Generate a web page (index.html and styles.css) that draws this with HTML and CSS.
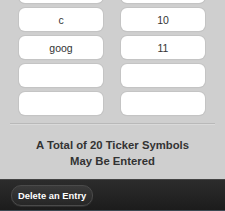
FILE: index.html
```html
<!DOCTYPE html>
<html>
<head>
<meta charset="utf-8">
<link rel="stylesheet" href="styles.css">
</head>
<body>
<div class="page">
  <div class="grid">
    <div class="field"></div><div class="field"></div>
    <div class="field">c</div><div class="field">10</div>
    <div class="field">goog</div><div class="field">11</div>
    <div class="field"></div><div class="field"></div>
    <div class="field"></div><div class="field"></div>
  </div>
  <div class="divider"></div>
  <p class="note">A Total of 20 Ticker Symbols<br>May Be Entered</p>
</div>
<div class="toolbar">
  <button class="btn">Delete an Entry</button>
</div>
</body>
</html>
```
FILE: styles.css
```css
html, body {
  margin: 0;
  padding: 0;
  height: 211px;
  overflow: hidden;
  background: #cfcfcf;
  font-family: "Liberation Sans", Arial, sans-serif;
}
.page {
  height: 179px;
  overflow: hidden;
}
.grid {
  display: grid;
  grid-template-columns: 84px 84px;
  grid-auto-rows: 23px;
  column-gap: 18px;
  row-gap: 5px;
  margin: -20px 0 0 19px;
}
.field {
  background: #ffffff;
  border-radius: 6px;
  box-shadow: 0 0 0 1px #c4c4c4, 0 1px 1px rgba(0,0,0,0.08);
  display: flex;
  align-items: center;
  justify-content: center;
  font-size: 10.5px;
  color: #333333;
}
.divider {
  margin: 8px 10px 0 10px;
  height: 1px;
  background: #b9b9b9;
  border-bottom: 1px solid #dadada;
}
.note {
  margin: 12px 0 0 0;
  text-align: center;
  font-weight: bold;
  font-size: 11.3px;
  line-height: 16px;
  color: #333333;
}
.toolbar {
  height: 30px;
  background: linear-gradient(#2c2c2c, #1c1c1c);
  border-top: 1px solid #444;
  border-bottom: 1px solid #3d4852;
  display: flex;
  align-items: center;
  padding-left: 11px;
}
.btn {
  height: 21px;
  padding: 0 6px;
  border-radius: 10px;
  border: 1px solid #4a4a4a;
  background: linear-gradient(#3a3a3a, #262626);
  box-shadow: 0 1px 0 rgba(255,255,255,0.08);
  color: #ffffff;
  font-family: "Liberation Sans", Arial, sans-serif;
  font-weight: bold;
  font-size: 9.4px;
}
```
